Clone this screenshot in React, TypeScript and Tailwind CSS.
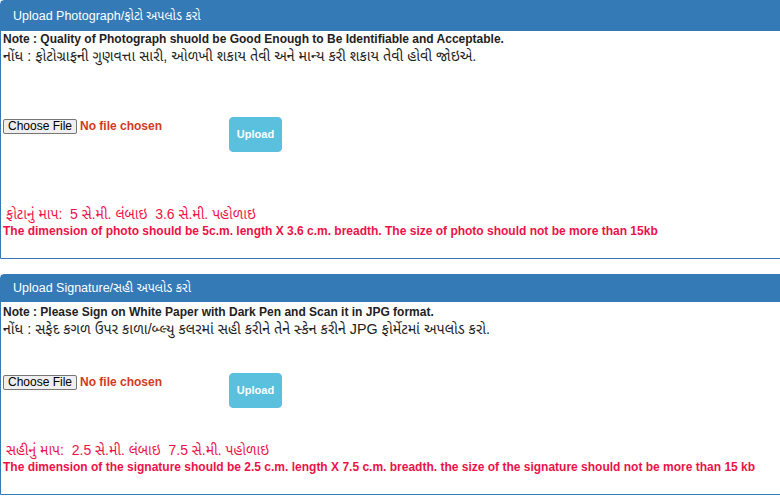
const font = "font-['Liberation_Sans','Noto_Sans_Gujarati','Noto_Sans',sans-serif]";

type PanelProps = {
  title: string;
  note: string;
  noteGu: string;
  sizeGu: string;
  sizeEn: string;
  headerH: string;
  notePad: string;
  rowGap: string;
  redGap: string;
  bottomPad: string;
};

function FileRow({ gap }: { gap: string }) {
  return (
    <div className={`flex items-start ${gap}`}>
      <div className="flex items-center w-[228px] pl-[2px]">
        <span className="h-[15px] px-[4px] border border-[#767676] bg-[#efefef] rounded-[2px] text-[12px] leading-[13px] text-black">
          Choose File
        </span>
        <span className="ml-[3px] text-[12px] font-bold text-[#d4391c]">No file chosen</span>
      </div>
      <button className="w-[53px] h-[35px] rounded-[4px] bg-[#5bc0de] border border-[#5bc0de] text-white text-[11px] font-bold">
        Upload
      </button>
    </div>
  );
}

function Panel(p: PanelProps) {
  return (
    <div className="w-[800px] border border-[#337ab7] rounded-tl-[4px] bg-white">
      <div className={`${p.headerH} bg-[#337ab7] flex items-center pl-[12px] text-white text-[12.5px]`}>
        {p.title}
      </div>
      <div className={`${p.notePad} pl-[2px] text-[12px] leading-[17px] text-[#222]`}>
        <div className="font-bold">{p.note}</div>
        <div className="text-[14.3px] whitespace-pre">{p.noteGu}</div>
      </div>
      <FileRow gap={p.rowGap} />
      <div className={`${p.redGap} ${p.bottomPad} text-[#ed1148] text-[12px] font-bold`}>
        <div className="pl-[5px] font-normal text-[14px] leading-[18px] whitespace-pre">{p.sizeGu}</div>
        <div className="pl-[2px] leading-[17px]">{p.sizeEn}</div>
      </div>
    </div>
  );
}

export default function App() {
  return (
    <div className={`w-[780px] h-[496px] overflow-hidden bg-white ${font}`}>
      <Panel
        title="Upload Photograph/ફોટો અપલોડ કરો"
        note="Note : Quality of Photograph shuold be Good Enough to Be Identifiable and Acceptable."
        noteGu="નોંધ : ફોટોગ્રાફની ગુણવત્તા સારી, ઓળખી શકાય તેવી અને માન્ય કરી શકાય તેવી હોવી જોઇએ."
        sizeGu="ફોટાનું માપ:  5 સે.મી. લંબાઇ  3.6 સે.મી. પહોળાઇ"
        sizeEn="The dimension of photo should be 5c.m. length X 3.6 c.m. breadth. The size of photo should not be more than 15kb"
        headerH="h-[30px]"
        notePad="pt-[0px]"
        rowGap="mt-[52px]"
        redGap="mt-[53px]"
        bottomPad="pb-[18px]"
      />
      <div className="h-[15px]" />
      <Panel
        title="Upload Signature/સહી અપલોડ કરો"
        note="Note : Please Sign on White Paper with Dark Pen and Scan it in JPG format."
        noteGu="નોંધ : સફેદ કગળ ઉપર કાળા/બ્લ્યુ કલરમાં સહી કરીને તેને સ્કેન કરીને JPG ફોર્મેટમાં અપલોડ કરો."
        sizeGu="સહીનું માપ:  2.5 સે.મી. લંબાઇ  7.5 સે.મી. પહોળાઇ"
        sizeEn="The dimension of the signature should be 2.5 c.m. length X 7.5 c.m. breadth. the size of the signature should not be more than 15 kb"
        headerH="h-[27px]"
        notePad="pt-[2px]"
        rowGap="mt-[35px]"
        redGap="mt-[33px]"
        bottomPad="pb-[18px]"
      />
    </div>
  );
}
